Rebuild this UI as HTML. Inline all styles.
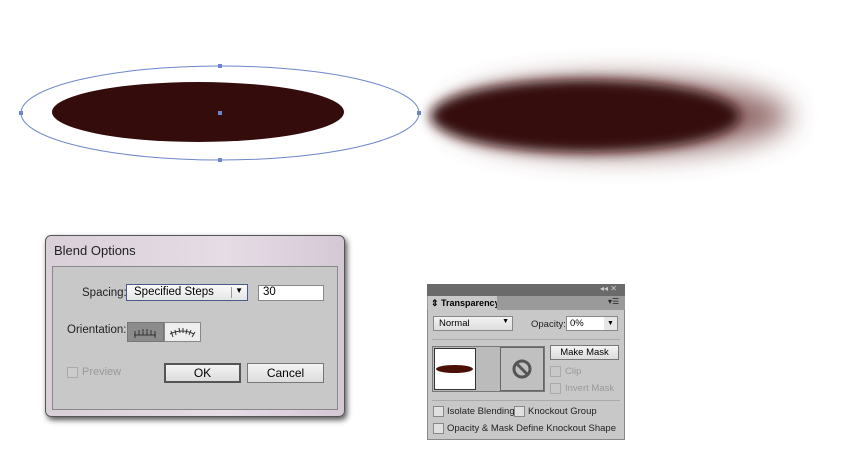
<!DOCTYPE html><html><head><style>
body{margin:0;width:850px;height:464px;background:#fff;position:relative;overflow:hidden;font-family:"Liberation Sans",sans-serif}
.a{position:absolute}
.btn{position:absolute;background:linear-gradient(#f4f4f4,#dcdcdc);border:1px solid #777;font-size:12px;text-align:center;box-sizing:border-box}
.cb{position:absolute;width:9px;height:9px;border:1px solid #888;background:#e0e0e0}
.t{position:absolute;font-size:9.5px;color:#222;white-space:nowrap}
</style></head><body>
<svg class="a" style="left:0;top:0" width="850" height="200">
<defs>
<filter id="b1" x="-30%" y="-80%" width="160%" height="260%"><feGaussianBlur stdDeviation="6"/></filter>
<filter id="b2" x="-30%" y="-80%" width="160%" height="260%"><feGaussianBlur stdDeviation="14"/></filter>
</defs>
<ellipse cx="220" cy="113" rx="199" ry="47" fill="none" stroke="#6d86c8" stroke-width="1"/>
<ellipse cx="198" cy="112" rx="146" ry="30" fill="#340c0c"/>
<rect x="218" y="111" width="4" height="4" fill="#6d86c8"/>
<rect x="218" y="64" width="4" height="4" fill="#6d86c8"/><rect x="218" y="158" width="4" height="4" fill="#6d86c8"/>
<rect x="19" y="111" width="4" height="4" fill="#6d86c8"/><rect x="417" y="111" width="4" height="4" fill="#6d86c8"/>
<ellipse cx="620" cy="116" rx="170" ry="38" fill="#7a4a4a" opacity="0.8" filter="url(#b2)"/>
<ellipse cx="585" cy="116" rx="155" ry="36" fill="#340c0c" filter="url(#b1)"/>
</svg>
<div class="a" style="left:45px;top:235px;width:300px;height:182px;border-radius:6px;background:linear-gradient(90deg,#d8cfd8,#e6dce6 60%,#d4c8d4);box-shadow:2px 3px 6px #555;border:1px solid #555;box-sizing:border-box"></div>
<div class="a" style="left:54px;top:243px;font-size:13px;color:#222">Blend Options</div>
<div class="a" style="left:52px;top:266px;width:286px;height:144px;background:#c8c8c8;border:1px solid #888;box-sizing:border-box"></div>
<div class="a" style="left:82px;top:287px;font-size:11.5px;color:#222">Spacing:</div>
<div class="a" style="left:126px;top:284px;width:122px;height:17px;background:linear-gradient(#fafafa,#e6e6e6);border:1px solid #4a5a8a;box-sizing:border-box;font-size:11.5px;padding:1px 0 0 7px">Specified Steps<span style="position:absolute;right:4px;top:1px;font-size:8px">▼</span><span style="position:absolute;right:15px;top:2px;width:1px;height:11px;background:#999"></span></div>
<div class="a" style="left:258px;top:285px;width:66px;height:16px;background:#fff;border:1px solid #888;box-sizing:border-box;font-size:11.5px;padding-left:4px">30</div>
<div class="a" style="left:67px;top:324px;font-size:11.5px;color:#222">Orientation:</div>
<div class="a" style="left:127px;top:322px;width:37px;height:20px;background:#8c8c8c;border:1px solid #777;box-sizing:border-box"></div>
<div class="a" style="left:164px;top:322px;width:37px;height:20px;background:#eee;border:1px solid #888;box-sizing:border-box"></div>
<svg class="a" style="left:127px;top:322px" width="74" height="20" stroke="#333" stroke-width="1" fill="none">
<path d="M7 13 H29 M8 9V16 M12 8V13 M16 7V13 M20 7V13 M24 8V13 M28 9V16"/>
<path d="M43 12 Q55 6 67 12 M44 9l2 6 M48 8l1 5 M52 6l1 5 M56 6l0 5 M60 7l-1 5 M64 8l-2 5 M68 10l-3 5"/>
</svg>
<div class="cb" style="left:67px;top:367px;border-color:#aaa;background:#ccc"></div>
<div class="a" style="left:82px;top:366px;font-size:11px;color:#999">Preview</div>
<div class="btn" style="left:164px;top:363px;width:77px;height:20px;line-height:16px;border:2px solid #555">OK</div>
<div class="btn" style="left:247px;top:363px;width:77px;height:20px;line-height:18px">Cancel</div>

<div class="a" style="left:427px;top:284px;width:198px;height:156px;background:#c8c8c8;border:1px solid #888;box-sizing:border-box"></div>
<div class="a" style="left:427px;top:284px;width:198px;height:12px;background:#6a6a6a"></div>
<div class="a" style="left:600px;top:284px;font-size:8px;color:#ccc">◂◂ ✕</div>
<div class="a" style="left:427px;top:296px;width:198px;height:14px;background:#9a9a9a"></div>
<div class="a" style="left:428px;top:296px;width:69px;height:14px;background:#c8c8c8;font-size:9px;font-weight:bold;line-height:14px;padding-left:3px;box-sizing:border-box;white-space:nowrap;overflow:hidden">⇕ Transparency</div>
<div class="a" style="left:608px;top:297px;font-size:8px;color:#222">▾☰</div>
<div class="a" style="left:433px;top:316px;width:80px;height:15px;background:linear-gradient(#f2f2f2,#ddd);border:1px solid #888;box-sizing:border-box;font-size:9.5px;padding:1px 0 0 5px">Normal<span style="position:absolute;right:3px;top:1px;font-size:7px">▼</span></div>
<div class="t" style="left:531px;top:319px">Opacity:</div>
<div class="a" style="left:566px;top:316px;width:52px;height:15px;background:#fff;border:1px solid #888;box-sizing:border-box;font-size:9.5px;padding:1px 0 0 3px">0%<span style="position:absolute;right:0;top:0;width:13px;height:13px;background:#e6e6e6;font-size:7px;text-align:center;line-height:13px">▼</span></div>
<div class="a" style="left:432px;top:339px;width:188px;height:1px;background:#aaa"></div>
<div class="a" style="left:432px;top:346px;width:113px;height:46px;border:1px solid #777;box-sizing:border-box;background:#bbb"></div>
<div class="a" style="left:434px;top:348px;width:42px;height:42px;background:#fff;border:1px solid #333;box-sizing:border-box"></div>
<div class="a" style="left:436px;top:365px;width:37px;height:8px;border-radius:50%;background:#4a1008"></div>
<div class="a" style="left:500px;top:347px;width:44px;height:44px;border:1px solid #666;box-sizing:border-box;background:#c0c0c0"></div>
<svg class="a" style="left:511px;top:358px" width="22" height="22"><circle cx="11" cy="11" r="8" fill="none" stroke="#555" stroke-width="3"/><line x1="5" y1="5" x2="17" y2="17" stroke="#555" stroke-width="3"/></svg>
<div class="btn" style="left:550px;top:345px;width:69px;height:15px;font-size:9.5px;line-height:13px">Make Mask</div>
<div class="cb" style="left:550px;top:366px;border-color:#aaa;background:#c8c8c8"></div><div class="t" style="left:565px;top:366px;color:#999">Clip</div>
<div class="cb" style="left:550px;top:383px;border-color:#aaa;background:#c8c8c8"></div><div class="t" style="left:565px;top:383px;color:#999">Invert Mask</div>
<div class="a" style="left:432px;top:400px;width:188px;height:1px;background:#aaa"></div>
<div class="cb" style="left:433px;top:406px"></div><div class="t" style="left:447px;top:406px">Isolate Blending</div>
<div class="cb" style="left:514px;top:406px"></div><div class="t" style="left:528px;top:406px">Knockout Group</div>
<div class="cb" style="left:433px;top:423px"></div><div class="t" style="left:447px;top:423px">Opacity &amp; Mask Define Knockout Shape</div>
</body></html>
